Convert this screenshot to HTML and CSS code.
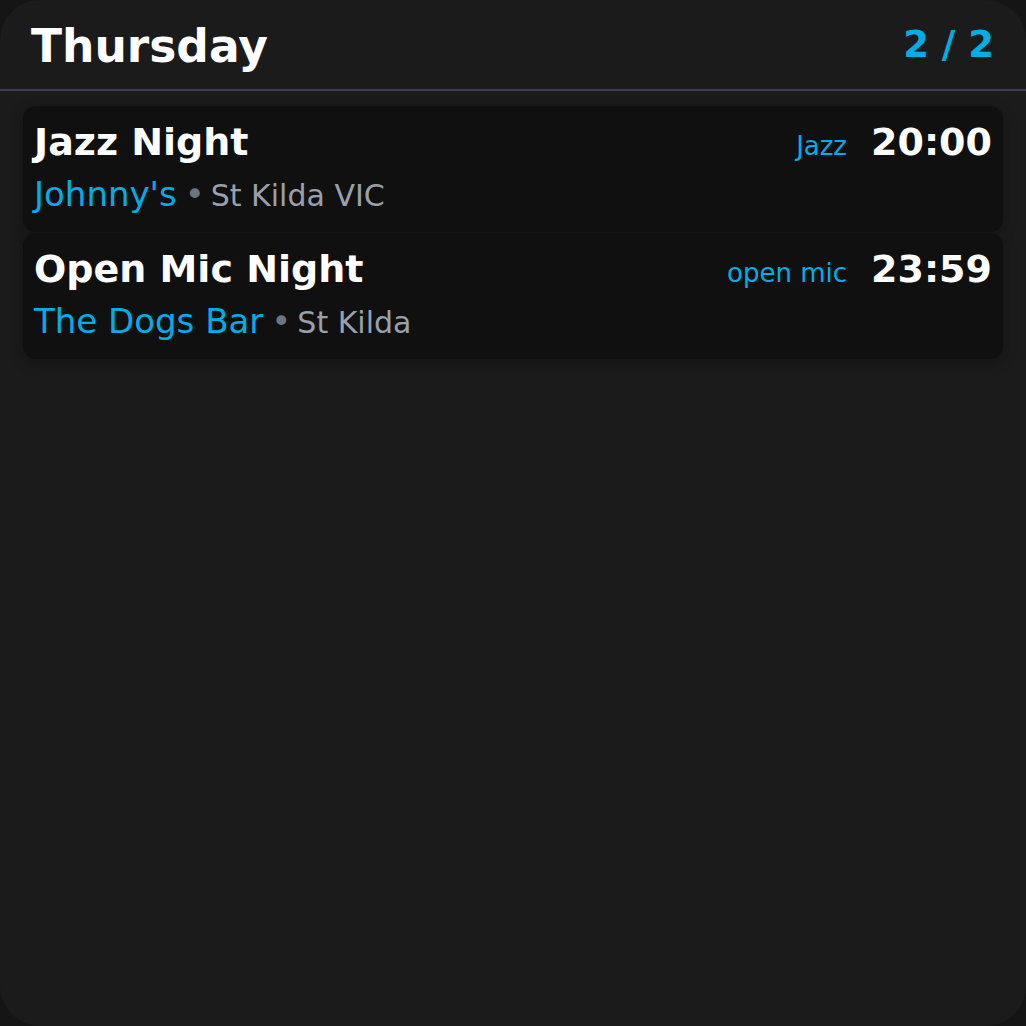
FILE: index.html
```html
<!DOCTYPE html>
<html>
<head>
<meta charset="utf-8">
<link rel="stylesheet" href="styles.css">
</head>
<body>
<div class="screen">
  <header class="header">
    <h1 class="day">Thursday</h1>
    <div class="pager">2 / 2</div>
  </header>
  <div class="list">
    <div class="card">
      <div class="row">
        <div class="title">Jazz Night</div>
        <div class="meta"><span class="tag">Jazz</span><span class="time">20:00</span></div>
      </div>
      <div class="place"><span class="venue">Johnny's</span><span class="dot">•</span><span class="suburb">St Kilda VIC</span></div>
    </div>
    <div class="card">
      <div class="row">
        <div class="title">Open Mic Night</div>
        <div class="meta"><span class="tag">open mic</span><span class="time">23:59</span></div>
      </div>
      <div class="place"><span class="venue">The Dogs Bar</span><span class="dot">•</span><span class="suburb">St Kilda</span></div>
    </div>
  </div>
</div>
</body>
</html>
```
FILE: styles.css
```css
html, body {
  margin: 0;
  padding: 0;
  background: #151515;
}
body {
  font-family: "DejaVu Sans", sans-serif;
}
.screen {
  width: 1026px;
  height: 1026px;
  box-sizing: border-box;
  background: #1b1b1b;
  border-radius: 40px;
  overflow: hidden;
}
.header {
  display: flex;
  align-items: center;
  justify-content: space-between;
  height: 91px;
  box-sizing: border-box;
  padding: 0 32px 0 31px;
  border-bottom: 2px solid #3a3f4b;
}
.day {
  margin: 0;
  padding-top: 3px;
  font-size: 45.5px;
  font-weight: bold;
  color: #ffffff;
}
.pager {
  font-size: 37px;
  font-weight: bold;
  color: #00ade6;
}
.list {
  display: flex;
  flex-direction: column;
  gap: 1px;
  padding: 15px 23px;
}
.card {
  background: #101010;
  border-radius: 13px;
  height: 126px;
  box-sizing: border-box;
  padding: 14px 11px 0 11px;
  box-shadow: 0 4px 14px rgba(0,0,0,0.25);
}
.row {
  display: flex;
  justify-content: space-between;
  align-items: baseline;
}
.title {
  font-size: 38px;
  font-weight: bold;
  color: #ffffff;
}
.meta {
  display: flex;
  align-items: baseline;
  gap: 24px;
}
.tag {
  font-size: 26px;
  color: #00ade6;
}
.time {
  font-size: 38px;
  font-weight: bold;
  color: #ffffff;
}
.place {
  margin-top: 10px;
  display: flex;
  align-items: baseline;
}
.venue {
  font-size: 34px;
  color: #00ade6;
}
.dot {
  font-size: 34px;
  color: #6e7480;
  margin: 0 6px 0 8px;
}
.suburb {
  font-size: 30px;
  color: #9aa0aa;
}
```
